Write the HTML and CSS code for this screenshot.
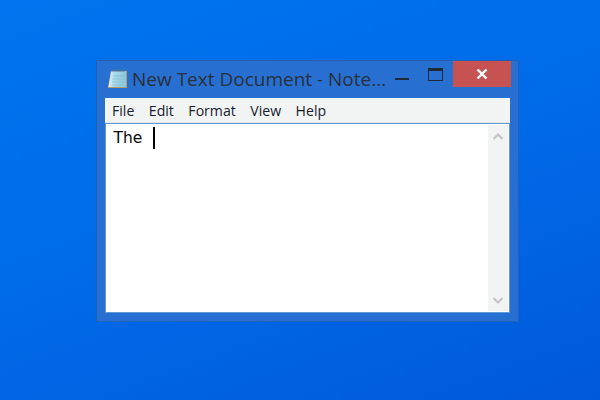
FILE: index.html
```html
<!DOCTYPE html>
<html lang="en">
<head>
<meta charset="utf-8">
<title>New Text Document - Notepad</title>
<link rel="stylesheet" href="styles.css">
</head>
<body>
<div class="desktop">
  <div class="window">
    <div class="titlebar">
      <svg class="app-icon" width="22" height="22" viewBox="0 0 22 22">
        <defs>
          <linearGradient id="page" x1="0" y1="0" x2="1" y2="0">
            <stop offset="0" stop-color="#dff2f6"/>
            <stop offset=".35" stop-color="#a8d8e8"/>
            <stop offset="1" stop-color="#8cc8e0"/>
          </linearGradient>
        </defs>
        <path d="M5 3H21V20H2V19Z" fill="#b99a68"/>
        <path d="M5 3H20V19H2.500Z" fill="url(#page)"/>
        <path d="M7 8H19M6.500 11H19M6 14H19M5.500 17H19" stroke="#7fb8d2" stroke-width="1" opacity=".6"/>
        <path d="M6 1.500V4M8 1.500V4M10 1.500V4M12 1.500V4M14 1.500V4M16 1.500V4M18 1.500V4" stroke="#5f7480" stroke-width="1"/>
      </svg>
      <span class="title">New Text Document - Note...</span>
      <div class="controls">
        <div class="min"></div>
        <div class="max"></div>
        <div class="close">
          <svg width="12" height="10" viewBox="0 0 12 10"><path d="M1.500 .5L10.500 9.500M10.500 .5L1.500 9.500" stroke="#fff" stroke-width="2.400"/></svg>
        </div>
      </div>
    </div>
    <div class="client">
      <div class="menubar">
        <span>File</span><span>Edit</span><span>Format</span><span>View</span><span>Help</span>
      </div>
      <div class="editor">
        <div class="text">The <span class="caret"></span></div>
        <div class="scrollbar">
          <svg width="12" height="8" viewBox="0 0 12 8"><path d="M1.500 7L6 2.500L10.500 7" fill="none" stroke="#c4c4c4" stroke-width="2.200"/></svg>
          <svg width="12" height="8" viewBox="0 0 12 8"><path d="M1.500 1L6 5.500L10.500 1" fill="none" stroke="#c4c4c4" stroke-width="2.200"/></svg>
        </div>
      </div>
    </div>
  </div>
</div>
</body>
</html>
```

FILE: styles.css
```css
html, body {
  margin: 0;
  padding: 0;
}
.desktop {
  width: 600px;
  height: 400px;
  box-sizing: border-box;
  padding: 60px 0 0 96px;
  overflow: hidden;
  background: linear-gradient(160deg, #0074ee 0%, #006ae8 50%, #0059da 100%);
}
.window {
  width: 423px;
  height: 262px;
  box-sizing: border-box;
  padding: 0 8px 8px 8px;
  display: flex;
  flex-direction: column;
  background: #2770d2;
  border: 1px solid #2062b8;
  border-top-color: #1f60b4;
}
.titlebar {
  height: 37px;
  display: flex;
  align-items: flex-start;
  flex: none;
}
.app-icon {
  margin: 7px 0 0 1px;
  flex: none;
}
.title {
  margin: 5px 0 0 4px;
  font: 19px/26px "Open Sans", sans-serif;
  color: #2a2f3a;
  white-space: nowrap;
}
.controls {
  margin-left: auto;
  margin-right: -1px;
  display: flex;
  align-items: flex-start;
}
.min {
  width: 14px;
  height: 2px;
  margin: 17px 19px 0 0;
  background: #1e2a38;
}
.max {
  width: 15px;
  height: 13px;
  box-sizing: border-box;
  margin: 7px 10px 0 0;
  border: 1px solid #1e2a38;
  border-top-width: 3px;
}
.close {
  width: 58px;
  height: 26px;
  display: flex;
  align-items: center;
  justify-content: center;
  background: #c75252;
}
.client {
  flex: 1;
  display: flex;
  flex-direction: column;
  min-height: 0;
}
.menubar {
  height: 25px;
  flex: none;
  box-sizing: border-box;
  padding-left: 7px;
  display: flex;
  gap: 14.500px;
  align-items: center;
  background: #f2f4f3;
  font: 14.100px/25px "Open Sans", sans-serif;
  color: #16202c;
  border-bottom: 1px solid #e4e6e6;
}
.editor {
  flex: 1;
  min-height: 0;
  display: flex;
  background: #fff;
  border: 1px solid #5c9ad8;
  padding: 1px;
}
.text {
  flex: 1;
  padding: 2px 0 0 6.500px;
  font: 15.500px/22px "DejaVu Sans", sans-serif;
  color: #0a0a0a;
  display: flex;
  align-items: flex-start;
  white-space: pre;
}
.caret {
  width: 2px;
  height: 22px;
  margin: 0 0 0 5.500px;
  background: #000;
}
.scrollbar {
  width: 20px;
  flex: none;
  background: #f2f4f3;
  display: flex;
  flex-direction: column;
  justify-content: space-between;
  align-items: center;
  padding: 7px 0 6px;
  box-sizing: border-box;
}
```
